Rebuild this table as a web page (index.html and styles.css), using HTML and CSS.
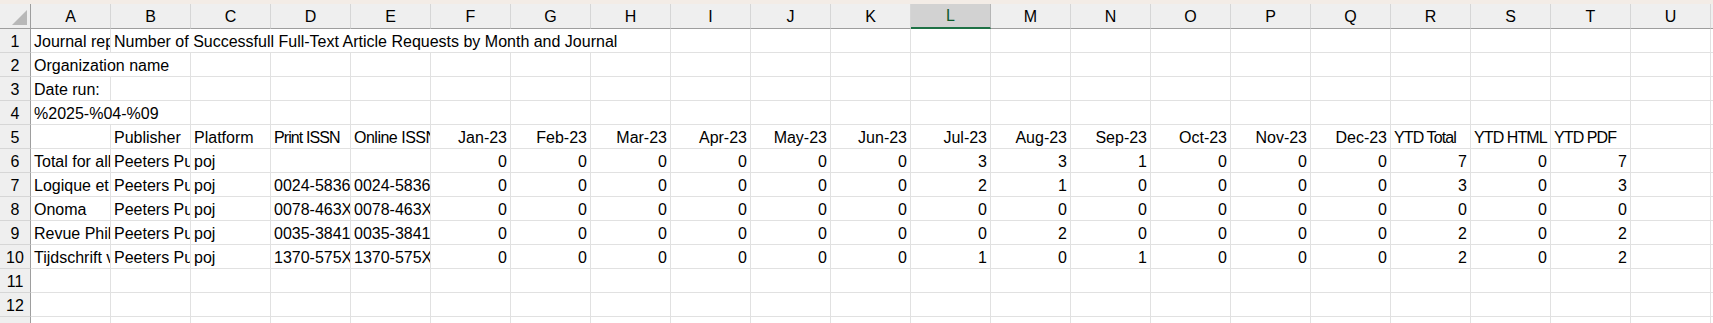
FILE: index.html
```html
<!DOCTYPE html>
<html>
<head>
<meta charset="utf-8">
<link rel="stylesheet" href="styles.css">
</head>
<body>
<div class="sheet">
  <div class="topstrip"></div>

  <div class="row head">
    <div class="corner"><span class="tri"></span></div>
    <div class="ch">A</div><div class="ch">B</div><div class="ch">C</div><div class="ch">D</div><div class="ch">E</div>
    <div class="ch">F</div><div class="ch">G</div><div class="ch">H</div><div class="ch">I</div><div class="ch">J</div>
    <div class="ch">K</div><div class="ch sel">L</div><div class="ch">M</div><div class="ch">N</div><div class="ch">O</div>
    <div class="ch">P</div><div class="ch">Q</div><div class="ch">R</div><div class="ch">S</div><div class="ch">T</div>
    <div class="ch">U</div><div class="ch">V</div>
  </div>

  <div class="row">
    <div class="rh">1</div>
    <div class="c">Journal report 1 (R4)</div>
    <div class="c s7">Number of Successfull Full-Text Article Requests by Month and Journal</div>
    <div class="c"></div><div class="c"></div><div class="c"></div><div class="c"></div><div class="c"></div>
    <div class="c"></div><div class="c"></div><div class="c"></div><div class="c"></div><div class="c"></div>
    <div class="c"></div><div class="c"></div><div class="c"></div><div class="c"></div>
  </div>

  <div class="row">
    <div class="rh">2</div>
    <div class="c s2">Organization name</div>
    <div class="c"></div><div class="c"></div><div class="c"></div><div class="c"></div><div class="c"></div>
    <div class="c"></div><div class="c"></div><div class="c"></div><div class="c"></div><div class="c"></div>
    <div class="c"></div><div class="c"></div><div class="c"></div><div class="c"></div><div class="c"></div>
    <div class="c"></div><div class="c"></div><div class="c"></div><div class="c"></div><div class="c"></div>
  </div>

  <div class="row">
    <div class="rh">3</div>
    <div class="c">Date run:</div>
    <div class="c"></div><div class="c"></div><div class="c"></div><div class="c"></div><div class="c"></div>
    <div class="c"></div><div class="c"></div><div class="c"></div><div class="c"></div><div class="c"></div>
    <div class="c"></div><div class="c"></div><div class="c"></div><div class="c"></div><div class="c"></div>
    <div class="c"></div><div class="c"></div><div class="c"></div><div class="c"></div><div class="c"></div>
    <div class="c"></div>
  </div>

  <div class="row">
    <div class="rh">4</div>
    <div class="c s2">%2025-%04-%09</div>
    <div class="c"></div><div class="c"></div><div class="c"></div><div class="c"></div><div class="c"></div>
    <div class="c"></div><div class="c"></div><div class="c"></div><div class="c"></div><div class="c"></div>
    <div class="c"></div><div class="c"></div><div class="c"></div><div class="c"></div><div class="c"></div>
    <div class="c"></div><div class="c"></div><div class="c"></div><div class="c"></div><div class="c"></div>
  </div>

  <div class="row">
    <div class="rh">5</div>
    <div class="c"></div><div class="c">Publisher</div><div class="c">Platform</div><div class="c tight">Print ISSN</div><div class="c semi">Online ISSN</div>
    <div class="c n">Jan-23</div><div class="c n">Feb-23</div><div class="c n">Mar-23</div><div class="c n">Apr-23</div><div class="c n">May-23</div>
    <div class="c n">Jun-23</div><div class="c n">Jul-23</div><div class="c n">Aug-23</div><div class="c n">Sep-23</div><div class="c n">Oct-23</div>
    <div class="c n">Nov-23</div><div class="c n">Dec-23</div><div class="c tight">YTD Total</div><div class="c tight">YTD HTML</div><div class="c tight">YTD PDF</div>
    <div class="c"></div><div class="c"></div>
  </div>

  <div class="row">
    <div class="rh">6</div>
    <div class="c">Total for all journals</div><div class="c">Peeters Publishers</div><div class="c">poj</div><div class="c"></div><div class="c"></div>
    <div class="c n">0</div><div class="c n">0</div><div class="c n">0</div><div class="c n">0</div><div class="c n">0</div>
    <div class="c n">0</div><div class="c n">3</div><div class="c n">3</div><div class="c n">1</div><div class="c n">0</div>
    <div class="c n">0</div><div class="c n">0</div><div class="c n">7</div><div class="c n">0</div><div class="c n">7</div>
    <div class="c"></div><div class="c"></div>
  </div>

  <div class="row">
    <div class="rh">7</div>
    <div class="c">Logique et Analyse</div><div class="c">Peeters Publishers</div><div class="c">poj</div><div class="c">0024-5836</div><div class="c">0024-5836</div>
    <div class="c n">0</div><div class="c n">0</div><div class="c n">0</div><div class="c n">0</div><div class="c n">0</div>
    <div class="c n">0</div><div class="c n">2</div><div class="c n">1</div><div class="c n">0</div><div class="c n">0</div>
    <div class="c n">0</div><div class="c n">0</div><div class="c n">3</div><div class="c n">0</div><div class="c n">3</div>
    <div class="c"></div><div class="c"></div>
  </div>

  <div class="row">
    <div class="rh">8</div>
    <div class="c">Onoma</div><div class="c">Peeters Publishers</div><div class="c">poj</div><div class="c">0078-463X</div><div class="c">0078-463X</div>
    <div class="c n">0</div><div class="c n">0</div><div class="c n">0</div><div class="c n">0</div><div class="c n">0</div>
    <div class="c n">0</div><div class="c n">0</div><div class="c n">0</div><div class="c n">0</div><div class="c n">0</div>
    <div class="c n">0</div><div class="c n">0</div><div class="c n">0</div><div class="c n">0</div><div class="c n">0</div>
    <div class="c"></div><div class="c"></div>
  </div>

  <div class="row">
    <div class="rh">9</div>
    <div class="c">Revue Philosophique de Louvain</div><div class="c">Peeters Publishers</div><div class="c">poj</div><div class="c">0035-3841</div><div class="c">0035-3841</div>
    <div class="c n">0</div><div class="c n">0</div><div class="c n">0</div><div class="c n">0</div><div class="c n">0</div>
    <div class="c n">0</div><div class="c n">0</div><div class="c n">2</div><div class="c n">0</div><div class="c n">0</div>
    <div class="c n">0</div><div class="c n">0</div><div class="c n">2</div><div class="c n">0</div><div class="c n">2</div>
    <div class="c"></div><div class="c"></div>
  </div>

  <div class="row">
    <div class="rh">10</div>
    <div class="c">Tijdschrift voor Filosofie</div><div class="c">Peeters Publishers</div><div class="c">poj</div><div class="c">1370-575X</div><div class="c">1370-575X</div>
    <div class="c n">0</div><div class="c n">0</div><div class="c n">0</div><div class="c n">0</div><div class="c n">0</div>
    <div class="c n">0</div><div class="c n">1</div><div class="c n">0</div><div class="c n">1</div><div class="c n">0</div>
    <div class="c n">0</div><div class="c n">0</div><div class="c n">2</div><div class="c n">0</div><div class="c n">2</div>
    <div class="c"></div><div class="c"></div>
  </div>

  <div class="row">
    <div class="rh">11</div>
    <div class="c"></div><div class="c"></div><div class="c"></div><div class="c"></div><div class="c"></div>
    <div class="c"></div><div class="c"></div><div class="c"></div><div class="c"></div><div class="c"></div>
    <div class="c"></div><div class="c"></div><div class="c"></div><div class="c"></div><div class="c"></div>
    <div class="c"></div><div class="c"></div><div class="c"></div><div class="c"></div><div class="c"></div>
    <div class="c"></div><div class="c"></div>
  </div>

  <div class="row">
    <div class="rh">12</div>
    <div class="c"></div><div class="c"></div><div class="c"></div><div class="c"></div><div class="c"></div>
    <div class="c"></div><div class="c"></div><div class="c"></div><div class="c"></div><div class="c"></div>
    <div class="c"></div><div class="c"></div><div class="c"></div><div class="c"></div><div class="c"></div>
    <div class="c"></div><div class="c"></div><div class="c"></div><div class="c"></div><div class="c"></div>
    <div class="c"></div><div class="c"></div>
  </div>

  <div class="row">
    <div class="rh"></div>
    <div class="c"></div><div class="c"></div><div class="c"></div><div class="c"></div><div class="c"></div>
    <div class="c"></div><div class="c"></div><div class="c"></div><div class="c"></div><div class="c"></div>
    <div class="c"></div><div class="c"></div><div class="c"></div><div class="c"></div><div class="c"></div>
    <div class="c"></div><div class="c"></div><div class="c"></div><div class="c"></div><div class="c"></div>
    <div class="c"></div><div class="c"></div>
  </div>
</div>
</body>
</html>
```
FILE: styles.css
```css
* { box-sizing: border-box; }
html, body { margin: 0; padding: 0; background: #ffffff; }
body { width: 1713px; height: 323px; overflow: hidden; }
.sheet {
  font-family: "Liberation Sans", Arial, sans-serif;
  font-size: 16px;
  color: #000;
  width: 1713px;
  height: 323px;
  overflow: hidden;
}
.topstrip { height: 4px; background: #f3ece6; }
.row {
  display: grid;
  grid-template-columns: 31px repeat(22, 80px);
  height: 24px;
  width: 1791px;
}
.row.head { height: 25px; }
.corner {
  background: #efefef;
  border-right: 1px solid #9e9e9e;
  border-bottom: 1px solid #9e9e9e;
  position: relative;
}
.tri {
  position: absolute;
  right: 3px;
  bottom: 3px;
  width: 0; height: 0;
  border-left: 15px solid transparent;
  border-bottom: 15px solid #b8b8b8;
}
.ch {
  background: #efefef;
  border-right: 1px solid #d6d6d6;
  border-bottom: 1px solid #9e9e9e;
  display: flex;
  align-items: center;
  justify-content: center;
  line-height: 18px;
  padding-top: 1px;
}
.ch.sel {
  background: #d2d2d2;
  color: #0d5c2c;
  border-bottom: 2px solid #1e7145;
  border-right-color: #b6b6b6;
}
.rh {
  background: #efefef;
  border-right: 1px solid #9e9e9e;
  border-bottom: 1px solid #d6d6d6;
  display: flex;
  align-items: flex-end;
  justify-content: center;
  line-height: 18px;
  padding-bottom: 1px;
}
.c {
  border-right: 1px solid #e1e1e1;
  border-bottom: 1px solid #e1e1e1;
  white-space: nowrap;
  overflow: hidden;
  line-height: 18px;
  padding: 0 3px 1px 3px;
  display: flex;
  align-items: flex-end;
  min-width: 0;
}
.c.n { justify-content: flex-end; }
.c.tight { letter-spacing: -0.9px; }
.c.semi { letter-spacing: -0.5px; }
.s2 { grid-column: span 2; }
.s7 { grid-column: span 7; }
```
